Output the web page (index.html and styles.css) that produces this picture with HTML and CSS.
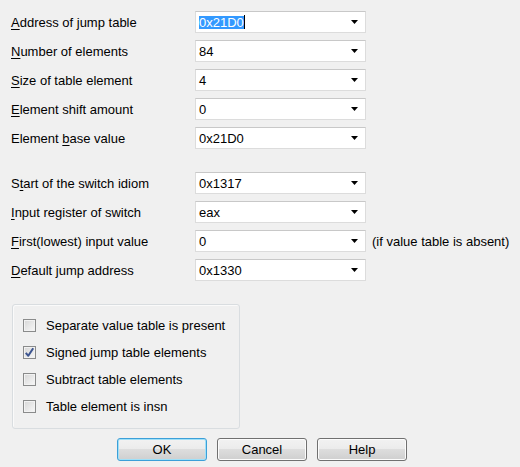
FILE: index.html
```html
<!DOCTYPE html>
<html>
<head>
<meta charset="utf-8">
<link rel="stylesheet" href="styles.css">
</head>
<body>
<div class="dialog">
  <div class="fields">
    <label class="lbl"><u>A</u>ddress of jump table</label>
    <div class="combo"><span class="val"><span class="sel">0x21D0</span><span class="caret"></span></span><svg class="arrow" width="7" height="4" viewBox="0 0 7 4"><polygon points="0,0 7,0 3.5,4" fill="#000"/></svg></div>
    <span></span>
    <label class="lbl"><u>N</u>umber of elements</label>
    <div class="combo"><span class="val">84</span><svg class="arrow" width="7" height="4" viewBox="0 0 7 4"><polygon points="0,0 7,0 3.5,4" fill="#000"/></svg></div>
    <span></span>
    <label class="lbl"><u>S</u>ize of table element</label>
    <div class="combo"><span class="val">4</span><svg class="arrow" width="7" height="4" viewBox="0 0 7 4"><polygon points="0,0 7,0 3.5,4" fill="#000"/></svg></div>
    <span></span>
    <label class="lbl"><u>E</u>lement shift amount</label>
    <div class="combo"><span class="val">0</span><svg class="arrow" width="7" height="4" viewBox="0 0 7 4"><polygon points="0,0 7,0 3.5,4" fill="#000"/></svg></div>
    <span></span>
    <label class="lbl">Element <u>b</u>ase value</label>
    <div class="combo"><span class="val">0x21D0</span><svg class="arrow" width="7" height="4" viewBox="0 0 7 4"><polygon points="0,0 7,0 3.5,4" fill="#000"/></svg></div>
    <span></span>
  </div>
  <div class="fields second">
    <label class="lbl">S<u>t</u>art of the switch idiom</label>
    <div class="combo"><span class="val">0x1317</span><svg class="arrow" width="7" height="4" viewBox="0 0 7 4"><polygon points="0,0 7,0 3.5,4" fill="#000"/></svg></div>
    <span></span>
    <label class="lbl"><u>I</u>nput register of switch</label>
    <div class="combo"><span class="val">eax</span><svg class="arrow" width="7" height="4" viewBox="0 0 7 4"><polygon points="0,0 7,0 3.5,4" fill="#000"/></svg></div>
    <span></span>
    <label class="lbl"><u>F</u>irst(lowest) input value</label>
    <div class="combo"><span class="val">0</span><svg class="arrow" width="7" height="4" viewBox="0 0 7 4"><polygon points="0,0 7,0 3.5,4" fill="#000"/></svg></div>
    <span class="note">(if value table is absent)</span>
    <label class="lbl"><u>D</u>efault jump address</label>
    <div class="combo"><span class="val">0x1330</span><svg class="arrow" width="7" height="4" viewBox="0 0 7 4"><polygon points="0,0 7,0 3.5,4" fill="#000"/></svg></div>
    <span></span>
  </div>
  <div class="group">
    <div class="check"><span class="box"></span><span>Separate value table is present</span></div>
    <div class="check"><span class="box"><svg width="11" height="11" viewBox="0 0 11 11"><path d="M1.8 5.8 L4.3 8.8 L9.2 1.2" fill="none" stroke="#3d5590" stroke-width="2" stroke-linejoin="round"/></svg></span><span>Signed jump table elements</span></div>
    <div class="check"><span class="box"></span><span>Subtract table elements</span></div>
    <div class="check"><span class="box"></span><span>Table element is insn</span></div>
  </div>
  <div class="buttons">
    <div class="btn default">OK</div>
    <div class="btn">Cancel</div>
    <div class="btn">Help</div>
  </div>
</div>
</body>
</html>
```
FILE: styles.css
```css
html, body {
  margin: 0;
  padding: 0;
  background: #f0f0f0;
}
body {
  font-family: "Liberation Sans", Arial, sans-serif;
  font-size: 13px;
  color: #000;
}
.dialog {
  padding: 11px 0 0 11px;
}
.fields {
  display: grid;
  grid-template-columns: 184px 171px auto;
  grid-auto-rows: 22px;
  row-gap: 7px;
  align-items: center;
}
.fields.second {
  margin-top: 23px;
}
.lbl u {
  text-decoration: underline;
  text-underline-offset: 2px;
}
.combo {
  height: 22px;
  box-sizing: border-box;
  background: #fff;
  border: 1px solid #dcdcdc;
  border-top-color: #c8c8c8;
  display: flex;
  align-items: center;
  justify-content: space-between;
  padding: 0 7px 0 3px;
}
.val {
  display: flex;
  align-items: center;
  line-height: 13px;
}
.sel {
  background: #3399ff;
  color: #fff;
  height: 13px;
  line-height: 13px;
}
.caret {
  width: 1px;
  height: 14px;
  background: #000;
}
.arrow {
  display: block;
}
.note {
  padding-left: 6px;
  white-space: nowrap;
}
.group {
  margin: 23px 0 0 1px;
  width: 228px;
  box-sizing: border-box;
  border: 1px solid #d9dde0;
  border-radius: 3px;
  box-shadow: inset 1px 1px 0 #fafafa;
  padding: 14px 10px 15px 10px;
  display: flex;
  flex-direction: column;
  gap: 14px;
}
.check {
  display: flex;
  align-items: center;
  gap: 10px;
  height: 13px;
}
.box {
  width: 13px;
  height: 13px;
  box-sizing: border-box;
  border: 1px solid #8a8b8b;
  background: linear-gradient(135deg, #d6d6d6, #f8f8f8);
  box-shadow: inset 0 0 0 1px #f2f2f2;
  display: flex;
  align-items: center;
  justify-content: center;
  flex: none;
}
.box svg {
  display: block;
}
.buttons {
  display: flex;
  gap: 10px;
  margin: 9px 0 0 106px;
}
.btn {
  width: 90px;
  height: 23px;
  box-sizing: border-box;
  border: 1px solid #707070;
  border-radius: 3px;
  background: linear-gradient(#f2f2f2 0%, #ebebeb 50%, #dddddd 50%, #cfcfcf 100%);
  box-shadow: inset 0 0 0 1px #fcfcfc;
  display: flex;
  align-items: center;
  justify-content: center;
}
.btn.default {
  border-color: #3c9fd8;
  box-shadow: inset 0 0 0 1px #9fe0f8;
}
```
